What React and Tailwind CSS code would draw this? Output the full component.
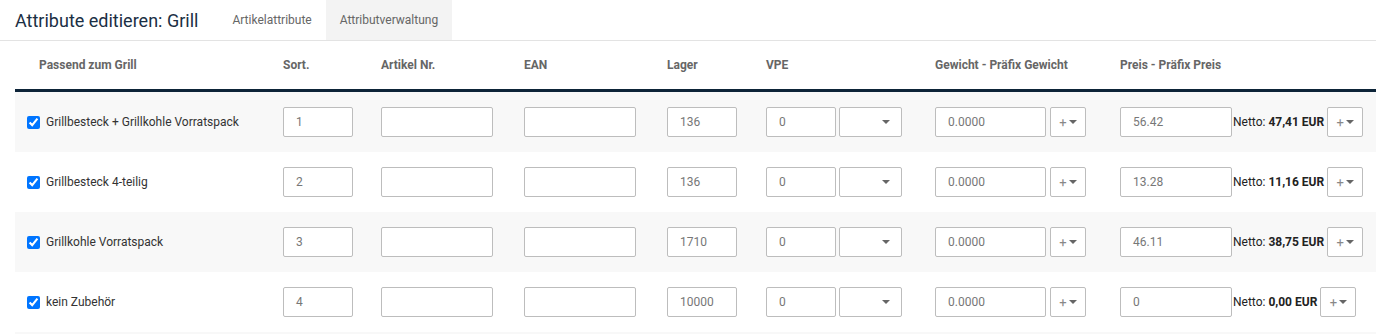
import React from "react";

const rows = [
  { name: "Grillbesteck + Grillkohle Vorratspack", sort: "1", lager: "136", preis: "56.42", netto: "47,41 EUR" },
  { name: "Grillbesteck 4-teilig", sort: "2", lager: "136", preis: "13.28", netto: "11,16 EUR" },
  { name: "Grillkohle Vorratspack", sort: "3", lager: "1710", preis: "46.11", netto: "38,75 EUR" },
  { name: "kein Zubehör", sort: "4", lager: "10000", preis: "0", netto: "0,00 EUR" },
];

const cols = "grid grid-cols-[268px_98px_143px_143px_99px_169px_185px_1fr]";

function Field({ value, className = "" }) {
  return (
    <div
      className={
        "h-[30px] border border-[#bdbdbd] rounded-[2px] bg-white flex items-center pl-[12px] text-[12px] text-[#777] " +
        className
      }
    >
      {value}
    </div>
  );
}

function Caret() {
  return (
    <svg width="8" height="4" viewBox="0 0 8 4" className="shrink-0">
      <path d="M0 0h8L4 4z" fill="#666" />
    </svg>
  );
}

function PlusButton() {
  return (
    <div className="h-[30px] w-[36px] border border-[#bdbdbd] rounded-[2px] bg-white flex items-center justify-center gap-[2px] text-[13px] text-[#888]">
      <span className="leading-none">+</span>
      <Caret />
    </div>
  );
}

export default function App() {
  return (
    <div className="w-[1376px] h-[334px] overflow-hidden bg-white font-['Roboto',sans-serif] text-[12px] text-[#333]">
      {/* top bar: title + tabs */}
      <div className="h-[41px] flex items-stretch border-b border-[#e3e3e3]">
        <h1 className="pl-[15px] pr-[20px] flex items-center text-[18px] text-[#1b2f44] font-normal">
          Attribute editieren: Grill
        </h1>
        <div className="flex items-center px-[14px] text-[12px] text-[#666]">Artikelattribute</div>
        <div className="flex items-center px-[14px] text-[12px] text-[#666] bg-[#f3f3f3]">Attributverwaltung</div>
      </div>

      <div className="pl-[15px]">
        {/* column headers */}
        <div className={cols + " h-[51px] items-center font-bold text-[12px] text-[#666] border-b-[3px] border-[#0d2438]"}>
          <div className="pl-[24px]">Passend zum Grill</div>
          <div>Sort.</div>
          <div>Artikel Nr.</div>
          <div>EAN</div>
          <div>Lager</div>
          <div>VPE</div>
          <div>Gewicht - Präfix Gewicht</div>
          <div>Preis - Präfix Preis</div>
        </div>

        {rows.map((r, i) => (
          <div key={i} className={cols + " h-[60px] items-center " + (i % 2 === 0 ? "bg-[#f8f8f8]" : "bg-white")}>
            <label className="pl-[12px] flex items-center gap-[6px] text-[12px] text-[#333]">
              <input type="checkbox" checked readOnly className="w-[13px] h-[13px] m-0 accent-[#0075ff]" />
              {r.name}
            </label>
            <Field value={r.sort} className="w-[70px]" />
            <Field value="" className="w-[112px]" />
            <Field value="" className="w-[112px]" />
            <Field value={r.lager} className="w-[70px]" />
            <div className="flex gap-[3px]">
              <Field value="0" className="w-[70px]" />
              <div className="h-[30px] w-[63px] border border-[#bdbdbd] rounded-[2px] bg-white flex items-center justify-end pr-[11px]">
                <Caret />
              </div>
            </div>
            <div className="flex gap-[4px]">
              <Field value="0.0000" className="w-[111px]" />
              <PlusButton />
            </div>
            <div className="flex items-center">
              <Field value={r.preis} className="w-[112px]" />
              <span className="ml-[1px] mr-[3px] text-[12px] text-[#222]">
                Netto: <b className="font-bold">{r.netto}</b>
              </span>
              <PlusButton />
            </div>
          </div>
        ))}
        <div className="h-[2px] bg-[#f8f8f8]" />
      </div>
    </div>
  );
}
